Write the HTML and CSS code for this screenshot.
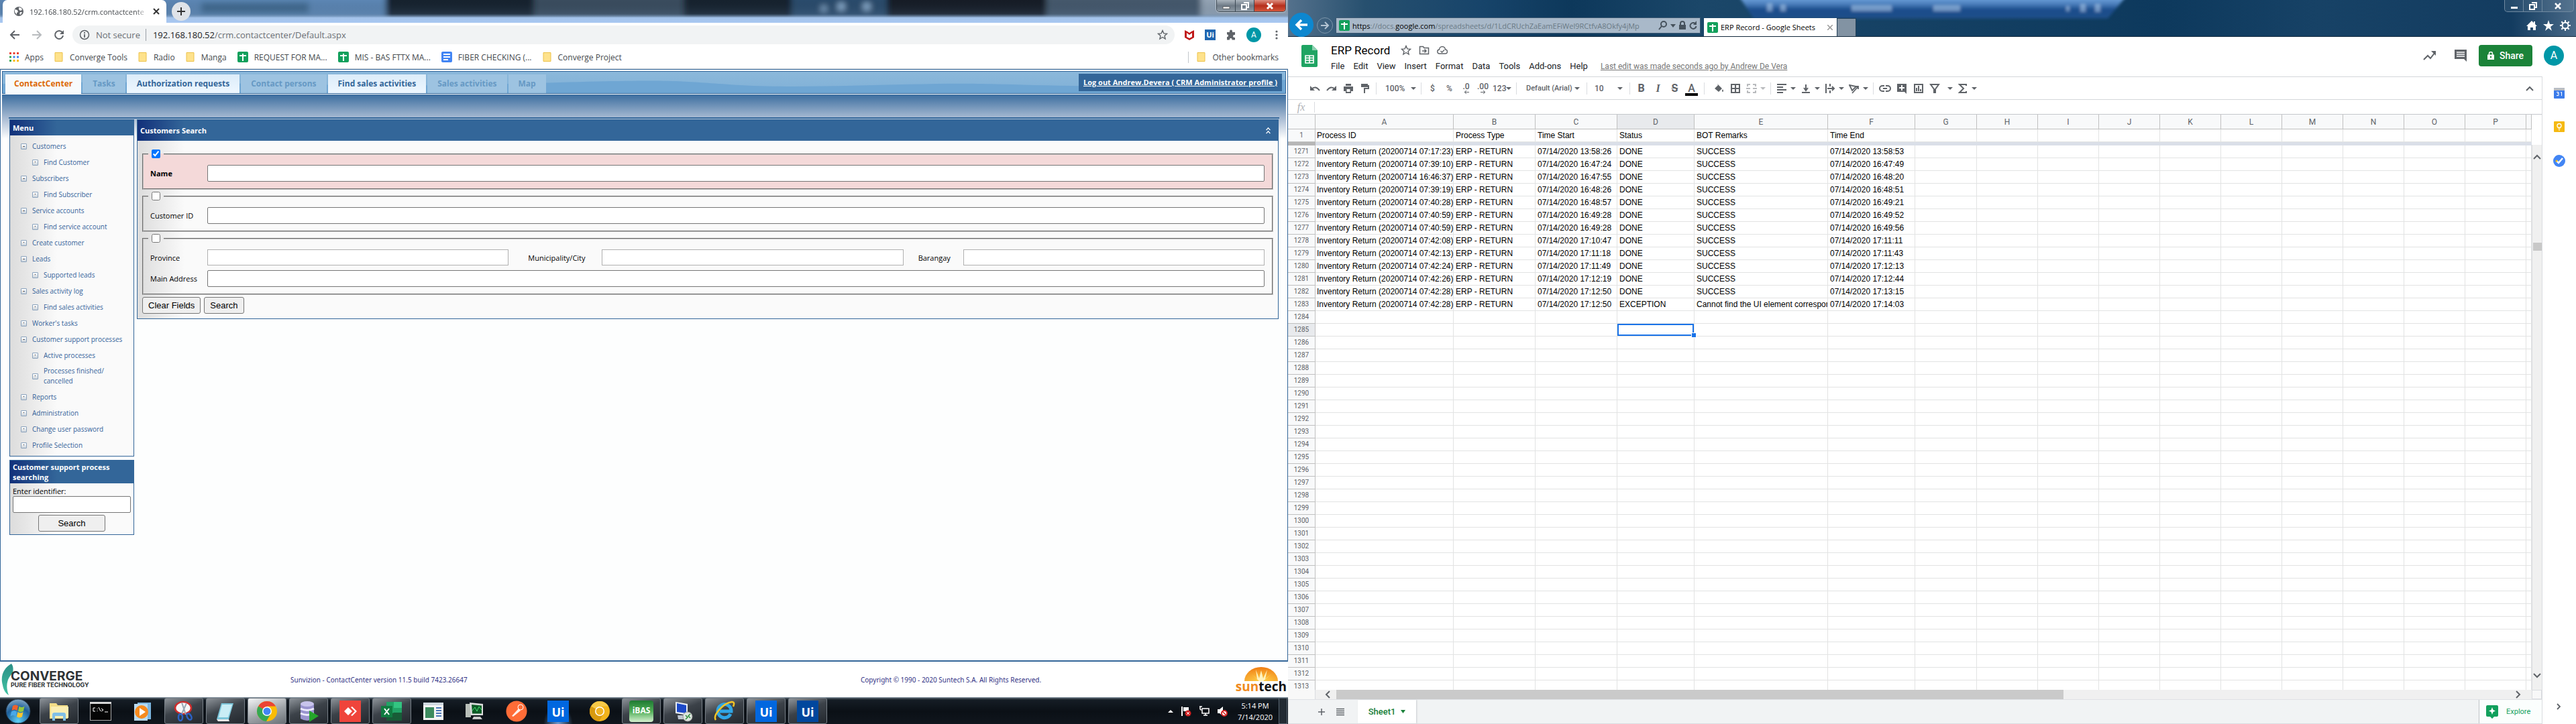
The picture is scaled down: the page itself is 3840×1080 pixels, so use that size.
FILE: index.html
```html
<!DOCTYPE html>
<html lang="en">
<head>
<meta charset="utf-8">
<title>Contact Center and ERP Record</title>
<link rel="stylesheet" href="styles.css">
</head>
<body>
<div class="desktop">

<section class="screen">
  <header class="chrome-strip">
    <svg class="glass" viewBox="0 0 1920 34" preserveAspectRatio="none" aria-hidden="true">
      <defs>
        <linearGradient id="sky" x1="0" y1="0" x2="0" y2="1"><stop offset="0" stop-color="#16222c" stop-opacity="0"/><stop offset=".6" stop-color="#5b7896" stop-opacity=".2"/><stop offset=".78" stop-color="#a3c3ea"/><stop offset="1" stop-color="#a9c8f2"/></linearGradient>
        <filter id="soft" x="-10%" y="-40%" width="120%" height="180%"><feGaussianBlur stdDeviation="4"/></filter>
      </defs>
      <rect width="1920" height="34" fill="#3a4c5e"/>
      <g filter="url(#soft)">
        <rect x="-10" y="-10" width="585" height="50" fill="#5c86b4"/>
        <rect x="300" y="4" width="160" height="16" fill="#41698f"/>
        <rect x="575" y="-10" width="220" height="40" fill="#16222e"/>
        <rect x="1020" y="-10" width="160" height="40" fill="#15212d"/>
        <rect x="1180" y="-10" width="150" height="40" fill="#2a4b6c"/>
        <rect x="1322" y="-10" width="240" height="40" fill="#121c26"/>
        <rect x="1560" y="-10" width="240" height="40" fill="#45586c"/>
        <rect x="1790" y="-10" width="150" height="40" fill="#93a3b4"/>
        <circle cx="1228" cy="13" r="5" fill="#7fa3c5"/><circle cx="1254" cy="10" r="6" fill="#8fb3d5"/><circle cx="1292" cy="10" r="6" fill="#8fb3d5"/>
      </g>
      <rect width="1920" height="34" fill="url(#sky)"/>
    </svg>
    <div class="browser-tab">
      <svg width="16" height="16" viewBox="0 0 16 16"><circle cx="8" cy="8" r="7" fill="#5f6368"/><path d="M2 5l4 1 1 3-2 1v3L2 9zM8 2l4 1 1 3-3 1-2-2zM10 9l3 0-2 4-2-1z" fill="#fff"/></svg>
      <span class="browser-tab-title">192.168.180.52/crm.contactcente</span>
      <button class="bare" aria-label="Close tab"><svg width="10" height="10" viewBox="0 0 10 10"><path d="M1 1l8 8M9 1L1 9" stroke="#333" stroke-width="2"/></svg></button>
    </div>
    <button class="new-tab" aria-label="New tab"><svg width="14" height="14" viewBox="0 0 14 14"><path d="M7 1v12M1 7h12" stroke="#333" stroke-width="2"/></svg></button>
    <div class="win-buttons">
      <button class="win-btn" aria-label="Minimize"><svg width="12" height="12" viewBox="0 0 12 12"><rect x="1" y="7" width="10" height="3" fill="#fff" stroke="#444" stroke-width=".7"/></svg></button>
      <button class="win-btn" aria-label="Restore"><svg width="12" height="12" viewBox="0 0 12 12"><path d="M4 1h7v7h-2M1 4h7v7h-7z" fill="none" stroke="#fff" stroke-width="2"/></svg></button>
      <button class="win-btn win-close" aria-label="Close"><svg width="12" height="12" viewBox="0 0 12 12"><path d="M2 2l8 8M10 2l-8 8" stroke="#fff" stroke-width="3"/></svg></button>
    </div>
  </header>

  <div class="address-row">
    <button class="bare nav-btn" aria-label="Back"><svg width="16" height="16" viewBox="0 0 16 16"><path d="M15 8H2M8 2L2 8l6 6" fill="none" stroke="#5f6368" stroke-width="2"/></svg></button>
    <button class="bare nav-btn" aria-label="Forward"><svg width="16" height="16" viewBox="0 0 16 16"><path d="M1 8h13M8 2l6 6-6 6" fill="none" stroke="#b8bbbe" stroke-width="2"/></svg></button>
    <button class="bare nav-btn" aria-label="Reload"><svg width="16" height="16" viewBox="0 0 16 16"><path d="M13 4.500A6 6 0 1 0 14 9" fill="none" stroke="#5f6368" stroke-width="2"/><path d="M15 1v6H9z" fill="#5f6368"/></svg></button>
    <div class="address-pill">
      <svg width="16" height="16" viewBox="0 0 16 16"><circle cx="8" cy="8" r="6.500" fill="none" stroke="#5f6368" stroke-width="1.500"/><path d="M8 7v5M8 4v2" stroke="#5f6368" stroke-width="1.800"/></svg>
      <span class="not-secure">Not secure</span>
      <span class="url"><b>192.168.180.52</b>/crm.contactcenter/Default.aspx</span>
      <svg class="push" width="16" height="16" viewBox="0 0 16 16"><path d="M8 1.500l1.900 4.400 4.700.4-3.600 3.100 1.100 4.600L8 11.500 3.900 14 5 9.400 1.400 6.300l4.700-.4z" fill="none" stroke="#5f6368" stroke-width="1.400"/></svg>
    </div>
    <div class="extensions">
      <svg width="16" height="16" viewBox="0 0 16 16"><path d="M1 1l4 2 3 2 3-2 4-2v11l-7 4-7-4z" fill="#c01818"/><path d="M4 5l4 3 4-3v6l-4 2-4-2z" fill="#fff"/></svg>
      <span class="ui-badge">Ui</span>
      <svg width="16" height="16" viewBox="0 0 16 16"><path d="M6 2.500a2 2 0 0 1 4 0V4h4v4h-1a2 2 0 0 0 0 4h1v3.500H9.500V14a2 2 0 0 0-3.500 0v1.500H2V11h1a2 2 0 0 0 0-3.500H2V4h4z" fill="#5f6368"/></svg>
      <span class="avatar avatar-small">A</span>
      <svg width="16" height="16" viewBox="0 0 16 16"><g fill="#5f6368"><circle cx="8" cy="3" r="1.600"/><circle cx="8" cy="8" r="1.600"/><circle cx="8" cy="13" r="1.600"/></g></svg>
    </div>
  </div>

  <nav class="bookmarks" aria-label="Bookmarks">
    <a href="#"><svg width="14" height="14" viewBox="0 0 14 14"><path d="M0 0h3v3H0zM5.500 0h3v3h-3zM11 0h3v3h-3z" fill="#ea4335"/><path d="M0 5.500h3v3H0z" fill="#34a853"/><path d="M5.500 5.500h3v3h-3zM11 5.500h3v3h-3z" fill="#4285f4"/><path d="M0 11h3v3H0z" fill="#34a853"/><path d="M5.500 11h3v3h-3zM11 11h3v3h-3z" fill="#fbbc04"/></svg>Apps</a>
    <a href="#"><svg width="14" height="14" viewBox="0 0 14 14"><path d="M1 .5h11v13H1z" fill="#fee28c" stroke="#ecc24a"/></svg>Converge Tools</a>
    <a href="#"><svg width="14" height="14" viewBox="0 0 14 14"><path d="M1 .5h11v13H1z" fill="#fee28c" stroke="#ecc24a"/></svg>Radio</a>
    <a href="#"><svg width="14" height="14" viewBox="0 0 14 14"><path d="M1 .5h11v13H1z" fill="#fee28c" stroke="#ecc24a"/></svg>Manga</a>
    <a href="#"><svg width="16" height="16" viewBox="0 0 16 16"><rect width="16" height="16" rx="2" fill="#12a05c"/><path d="M8 3v11M3 6h10" stroke="#fff" stroke-width="2"/></svg>REQUEST FOR MA...</a>
    <a href="#"><svg width="16" height="16" viewBox="0 0 16 16"><rect width="16" height="16" rx="2" fill="#12a05c"/><path d="M8 3v11M3 6h10" stroke="#fff" stroke-width="2"/></svg>MIS - BAS FTTX MA...</a>
    <a href="#"><svg width="16" height="16" viewBox="0 0 16 16"><rect width="16" height="16" rx="2" fill="#4285f4"/><path d="M3 4h10M3 8h10M3 12h7" stroke="#fff" stroke-width="2"/></svg>FIBER CHECKING (...</a>
    <a href="#"><svg width="14" height="14" viewBox="0 0 14 14"><path d="M1 .5h11v13H1z" fill="#fee28c" stroke="#ecc24a"/></svg>Converge Project</a>
    <a href="#" class="other"><svg width="14" height="14" viewBox="0 0 14 14"><path d="M1 .5h11v13H1z" fill="#fee28c" stroke="#ecc24a"/></svg>Other bookmarks</a>
  </nav>

  <main class="crm">
    <nav class="crm-tabs" aria-label="Sections">
      <svg class="wave" viewBox="0 0 1912 32" preserveAspectRatio="none" aria-hidden="true"><path d="M0 18C250 10 500 26 760 18S1000 14 1100 20s260-4 360-2 300 10 452-6V32H0z" fill="#6fa6d3"/></svg>
      <a href="#" class="crm-tab current">ContactCenter</a>
      <a href="#" class="crm-tab dim">Tasks</a>
      <a href="#" class="crm-tab">Authorization requests</a>
      <a href="#" class="crm-tab dim">Contact persons</a>
      <a href="#" class="crm-tab">Find sales activities</a>
      <a href="#" class="crm-tab dim">Sales activities</a>
      <a href="#" class="crm-tab dim">Map</a>
      <a href="#" class="logout">Log out Andrew.Devera ( CRM Administrator profile )</a>
    </nav>
    <div class="crm-body">
      <div class="rule"></div>
      <div class="crm-columns">
        <aside class="side">
          <section class="panel">
            <h2 class="panel-head menu-head">Menu</h2>
            <ul class="menu">
              <li class="group"><a href="#">Customers</a></li>
              <li class="sub"><a href="#">Find Customer</a></li>
              <li class="group"><a href="#">Subscribers</a></li>
              <li class="sub"><a href="#">Find Subscriber</a></li>
              <li class="group"><a href="#">Service accounts</a></li>
              <li class="sub"><a href="#">Find service account</a></li>
              <li><a href="#">Create customer</a></li>
              <li class="group"><a href="#">Leads</a></li>
              <li class="sub"><a href="#">Supported leads</a></li>
              <li class="group"><a href="#">Sales activity log</a></li>
              <li class="sub"><a href="#">Find sales activities</a></li>
              <li><a href="#">Worker's tasks</a></li>
              <li class="group"><a href="#">Customer support processes</a></li>
              <li class="sub"><a href="#">Active processes</a></li>
              <li class="sub"><a href="#">Processes finished/<br>cancelled</a></li>
              <li><a href="#">Reports</a></li>
              <li><a href="#">Administration</a></li>
              <li><a href="#">Change user password</a></li>
              <li><a href="#">Profile Selection</a></li>
            </ul>
          </section>
          <section class="panel">
            <h2 class="panel-head">Customer support process searching</h2>
            <form class="lookup">
              <label for="identifier">Enter identifier:</label>
              <input id="identifier" class="field" type="text">
              <button type="button" class="push-btn lookup-btn">Search</button>
            </form>
          </section>
        </aside>
        <section class="panel search">
          <h2 class="panel-head search-head">Customers Search
            <svg class="push" width="9" height="10" viewBox="0 0 9 12"><path d="M1 5l3.500-4L8 5M1 11l3.500-4L8 11" fill="none" stroke="#fff" stroke-width="1.600"/></svg>
          </h2>
          <form class="search-form">
            <fieldset class="active">
              <legend><input type="checkbox" checked aria-label="Search by name"></legend>
              <div class="line"><label for="name">Name</label><input id="name" class="field" type="text"></div>
            </fieldset>
            <fieldset>
              <legend><input type="checkbox" aria-label="Search by customer ID"></legend>
              <div class="line"><label for="cid">Customer ID</label><input id="cid" class="field" type="text"></div>
            </fieldset>
            <fieldset>
              <legend><input type="checkbox" aria-label="Search by address"></legend>
              <div class="line triple">
                <label for="prov">Province</label><input id="prov" class="field plain" type="text">
                <label for="city">Municipality/City</label><input id="city" class="field plain" type="text">
                <label for="brgy">Barangay</label><input id="brgy" class="field plain" type="text">
              </div>
              <div class="line"><label for="addr">Main Address</label><input id="addr" class="field" type="text"></div>
            </fieldset>
            <div class="actions">
              <button type="button" class="push-btn">Clear Fields</button>
              <button type="button" class="push-btn">Search</button>
            </div>
          </form>
        </section>
      </div>
    </div>
  </main>

  <footer class="crm-footer">
    <div class="converge">
      <svg width="20" height="48" viewBox="0 0 20 48"><defs><linearGradient id="leaf" x1="0" y1="0" x2="0" y2="1"><stop offset="0" stop-color="#2a8f86"/><stop offset="1" stop-color="#42c3a4"/></linearGradient></defs><path d="M15 0C4 6-2 18 2 32c1 7 5 13 9 15C6 34 8 22 17 14 18 8 18 4 15 0z" fill="url(#leaf)"/></svg>
      <div class="converge-name"><strong>CONVERGE</strong><small>PURE FIBER TECHNOLOGY</small></div>
    </div>
    <p class="version">Sunvizion - ContactCenter version 11.5 build 7423.26647</p>
    <p class="copyright">Copyright © 1990 - 2020 Suntech S.A. All Rights Reserved.</p>
    <div class="suntech">
      <svg width="50" height="22" viewBox="0 0 50 22"><defs><radialGradient id="sun" cx=".5" cy="1" r="1"><stop offset="0" stop-color="#ffd34a"/><stop offset="1" stop-color="#f07c12"/></radialGradient></defs><path d="M0 22a25 21 0 0 1 50 0z" fill="url(#sun)"/><path d="M22 22L10 11l9 8-2-14 5 13 3-12 3 12 6-13-3 14 10-8-13 11z" fill="#fff3c0"/></svg>
      <strong><span>sun</span>tech</strong>
    </div>
  </footer>

  <nav class="taskbar" aria-label="Taskbar">
    <button class="bare orb" aria-label="Start"><svg width="38" height="38" viewBox="0 0 38 38"><defs><radialGradient id="orb" cx=".5" cy=".9" r=".9"><stop offset="0" stop-color="#5fd0f5"/><stop offset=".6" stop-color="#1c5f9c"/><stop offset="1" stop-color="#86a9c4"/></radialGradient></defs><circle cx="19" cy="19" r="18" fill="url(#orb)" stroke="#24384c"/><path d="M11 11q4-3 8 0l-1.500 7q-4-3-8 0z" fill="#f0622b"/><path d="M20.500 11.500q4 3 8 0l-1.500 7q-4 3-8 0z" fill="#94c83d"/><path d="M9 19.500q4-3 8 0l-1.500 7q-4-3-8 0z" fill="#49a8e8"/><path d="M18.500 20q4 3 8 0l-1.500 7q-4 3-8 0z" fill="#fdc52d"/></svg></button>
    <button class="task open" aria-label="Explorer"><svg width="32" height="32" viewBox="0 0 32 32"><path d="M2 4h10l2 3h15v20H2z" fill="#f3dd87"/><path d="M4 9h26v17H4z" fill="#fbeeb2"/><path d="M6 30v-9q0-3 3-3h14q3 0 3 3v9h-4v-7H10v7z" fill="#80bfe6"/></svg></button>
    <button class="task" aria-label="Command prompt"><svg width="32" height="28" viewBox="0 0 32 28"><rect x=".5" y=".5" width="31" height="27" fill="#050505" stroke="#aaa"/><rect width="32" height="3" fill="#d8d8d8"/><path d="M8 9H5v5h3M11 10v1M11 13v1M13 8l3 6M17 10l3 2-3 2M22 15h5" stroke="#fff" fill="none"/></svg></button>
    <button class="task" aria-label="Media player"><svg width="30" height="30" viewBox="0 0 30 30"><rect x="8" y="2" width="20" height="25" fill="#7cb7e2"/><rect x="3" y="4" width="20" height="25" fill="#b9dcf3"/><circle cx="14" cy="16" r="10" fill="#f68b1f"/><path d="M11 10l9 6-9 6z" fill="#fff"/></svg></button>
    <button class="task open" aria-label="Snipping tool"><svg width="32" height="32" viewBox="0 0 32 32"><ellipse cx="15" cy="11" rx="12" ry="9" fill="#f7f7f7" stroke="#cf2c2c" stroke-width="2.500"/><path d="M13 3l6 18M20 4l-8 18" stroke="#9aa7b3" stroke-width="2"/><ellipse cx="11" cy="25" rx="3" ry="5" fill="none" stroke="#2c63c7" stroke-width="2.500"/><ellipse cx="24" cy="24" rx="3" ry="5" fill="none" stroke="#2c63c7" stroke-width="2.500" transform="rotate(-30 24 24)"/></svg></button>
    <button class="task open" aria-label="Notepad"><svg width="32" height="32" viewBox="0 0 32 32"><path d="M10 4h18l-7 24H3z" fill="#7cc5d9"/><path d="M11 6h15l-6 19H6z" fill="#c9edf5"/><path d="M3 28l18 0 1 3H5z" fill="#e8e8e8"/></svg></button>
    <button class="task open lit" aria-label="Chrome"><svg width="32" height="32" viewBox="0 0 32 32"><circle cx="16" cy="16" r="15" fill="#fbbc05"/><path d="M16 16L3 8.500A15 15 0 0 1 29 8.500H16z" fill="#ea4335"/><path d="M16 16L3 8.500A15 15 0 0 0 15 31l7-12z" fill="#34a853"/><circle cx="16" cy="16" r="7" fill="#fff"/><circle cx="16" cy="16" r="5.500" fill="#4285f4"/></svg></button>
    <button class="task open" aria-label="Database client"><svg width="32" height="32" viewBox="0 0 32 32"><path d="M4 5v22q10 6 20 0V5z" fill="#9a94cf"/><path d="M4 12q10 5 20 0M4 19q10 5 20 0" stroke="#eceaff" stroke-width="3" fill="none"/><ellipse cx="14" cy="5" rx="10" ry="4" fill="#c8c4ec"/><path d="M17 15l14 8-14 9z" fill="#25a52b"/></svg></button>
    <button class="task open" aria-label="AnyDesk"><svg width="32" height="32" viewBox="0 0 32 32"><rect width="32" height="32" fill="#ef443b"/><path d="M13 10l6 6-6 6-6-6zM17 10l2-1 7 7-7 7-2-1 6-6z" fill="#fff"/></svg></button>
    <button class="task open" aria-label="Excel"><svg width="32" height="32" viewBox="0 0 32 32"><path d="M8 2h23v28H8z" fill="#21a366"/><path d="M19 2h12v9H19z" fill="#33c481"/><path d="M19 18h12v12H8v-6z" fill="#185c37"/><rect y="8" width="17" height="17" fill="#107c41"/><path d="M5 12l7 9M12 12l-7 9" stroke="#fff" stroke-width="2"/></svg></button>
    <button class="task" aria-label="Document viewer"><svg width="30" height="26" viewBox="0 0 30 26"><rect width="30" height="26" fill="#f5f5f5"/><rect width="30" height="4" fill="#cfd8e0"/><rect x="3" y="7" width="13" height="16" fill="#3d8b5f"/><path d="M19 8h8M19 12h8M19 16h8M19 20h8" stroke="#4a76b8" stroke-width="2"/></svg></button>
    <button class="task" aria-label="System monitor"><svg width="32" height="32" viewBox="0 0 32 32"><rect x="2" y="5" width="8" height="20" fill="#b8beb8"/><path d="M8 3l20 2v17H10z" fill="#dcdcdc"/><path d="M11 6l15 1.500v12H12z" fill="#0c5a25"/><path d="M12 15l4-5 3 6 3-7 4 5" stroke="#49e070" fill="none"/><path d="M14 24h10l3 4H12z" fill="#c9c9c9"/></svg></button>
    <button class="task" aria-label="Postman"><svg width="32" height="32" viewBox="0 0 32 32"><circle cx="16" cy="16" r="15.500" fill="#ff6c37"/><path d="M9 23l10-11 3 3L11 24z" fill="#fff" opacity=".9"/><circle cx="22" cy="10" r="4" fill="none" stroke="#fff"/></svg></button>
    <button class="task glow" aria-label="UiPath"><span class="ui-tile">Ui</span></button>
    <button class="task" aria-label="Chrome Canary"><svg width="32" height="32" viewBox="0 0 32 32"><circle cx="16" cy="16" r="15" fill="#f2b41b"/><path d="M16 16L3 8.500A15 15 0 0 1 29 8.500H16z" fill="#f7c948"/><path d="M16 16L3 8.500A15 15 0 0 0 15 31l7-12z" fill="#d89a10"/><circle cx="16" cy="16" r="7" fill="#fff"/><circle cx="16" cy="16" r="5.500" fill="#f0b323"/></svg></button>
    <button class="task open" aria-label="iBAS"><span class="ibas">iBAS</span></button>
    <button class="task open" aria-label="Remote desktop"><svg width="32" height="32" viewBox="0 0 32 32"><path d="M5 2l18 3v17L5 19z" fill="#e9eef5"/><path d="M7 4l14 3v12L7 17z" fill="#1c49c8"/><path d="M8 22h12l3 6H9z" fill="#bfc7d1"/><circle cx="23" cy="24" r="7" fill="#dfe6e0" stroke="#999"/><path d="M20 22l3 3-3 3M27 20l-3 3 3 3" stroke="#2a8f3a" fill="none" stroke-width="1.500"/></svg></button>
    <button class="task open" aria-label="Internet Explorer"><svg width="32" height="32" viewBox="0 0 32 32"><path d="M25 20a10 10 0 1 1 1-4H9" fill="none" stroke="#2fa6e6" stroke-width="5"/><path d="M3 29C-2 22 14 4 27 2q5 0 2 7" fill="none" stroke="#f6c524" stroke-width="2.500"/></svg></button>
    <button class="task open" aria-label="UiPath Studio"><span class="ui-tile">Ui</span></button>
    <button class="task open" aria-label="UiPath Robot"><span class="ui-tile deep">Ui</span></button>
    <div class="tray">
      <svg width="8" height="6" viewBox="0 0 8 6"><path d="M0 5l4-4 4 4z" fill="#fff"/></svg>
      <svg width="16" height="16" viewBox="0 0 16 16"><path d="M2 1v14" stroke="#fff" stroke-width="2"/><path d="M4 2h8v6H4z" fill="#fff"/><circle cx="11" cy="11" r="4.500" fill="#d32020"/><path d="M9 9l4 4M13 9l-4 4" stroke="#fff"/></svg>
      <svg width="16" height="16" viewBox="0 0 16 16"><path d="M5 4h10v7H5zM7 14h6M10 11v3M2 1v3q0 2 2 2M1 1h4" fill="none" stroke="#fff" stroke-width="1.500"/></svg>
      <svg width="16" height="16" viewBox="0 0 16 16"><path d="M1 5h3l5-4v14l-5-4H1z" fill="#fff"/><circle cx="11" cy="11" r="4" fill="#fff" stroke="#d32020" stroke-width="2"/><path d="M8 8l6 6" stroke="#d32020" stroke-width="1.500"/></svg>
      <div class="clock"><span>5:14 PM</span><span>7/14/2020</span></div>
      <span class="show-desktop"></span>
    </div>
  </nav>
</section>

<section class="screen sheets">
  <header class="ie-bar">
    <svg class="glass" viewBox="0 0 1920 55" preserveAspectRatio="none" aria-hidden="true">
      <defs>
        <linearGradient id="ie" x1="0" x2="1"><stop offset="0" stop-color="#54718c"/><stop offset=".06" stop-color="#27506f"/><stop offset=".15" stop-color="#17446a"/><stop offset=".22" stop-color="#0d385b"/><stop offset=".32" stop-color="#1b4769"/><stop offset=".68" stop-color="#0d395d"/><stop offset=".8" stop-color="#174266"/><stop offset=".95" stop-color="#133c60"/><stop offset="1" stop-color="#4a6a88"/></linearGradient>
        <linearGradient id="ghost" x1="0" y1="0" x2="0" y2="1"><stop offset="0" stop-color="#79abe4"/><stop offset=".35" stop-color="#4c80bd"/><stop offset=".6" stop-color="#1b4d8c"/><stop offset="1" stop-color="#205089"/></linearGradient>
        <filter id="haze" x="-5%" y="-40%" width="110%" height="180%"><feGaussianBlur stdDeviation="2"/></filter>
      </defs>
      <rect width="1920" height="55" fill="url(#ie)"/>
      <g filter="url(#haze)"><path d="M672-6h578l-28 34H694z" fill="url(#ghost)"/><path d="M714 5h8v12h-8zM734 7h8v10h-8zM840 8h60v9h-60zM962 8h40v9h-40zM1160 9h5v8h-5zM1181 6h8v12h-8zM1203 6h8v12h-8z" fill="#b4d0ef" opacity=".55"/></g>
    </svg>
    <button class="bare ie-back" aria-label="Back"><svg width="20" height="20" viewBox="0 0 20 20"><path d="M19 10H3M10 3l-7 7 7 7" fill="none" stroke="#fff" stroke-width="3.500"/></svg></button>
    <button class="bare ie-forward" aria-label="Forward"><svg width="14" height="14" viewBox="0 0 14 14"><path d="M1 7h11M7 2l5 5-5 5" fill="none" stroke="#b3c4d3" stroke-width="2"/></svg></button>
    <div class="ie-address">
      <svg width="16" height="16" viewBox="0 0 16 16"><rect width="16" height="16" rx="2" fill="#12a05c"/><path d="M8 3v11M3 6h10" stroke="#fff" stroke-width="2"/></svg>
      <span class="ie-url"><b>https</b>://docs.<b>google.com</b>/spreadsheets/d/1LdCRUchZaEamEFiWel9RCtfvA8Okfy4jMp</span>
      <svg width="14" height="14" viewBox="0 0 14 14"><circle cx="8" cy="5" r="4" fill="none" stroke="#46525d" stroke-width="2"/><path d="M5 8l-4 5" stroke="#46525d" stroke-width="2"/></svg>
      <svg width="8" height="5" viewBox="0 0 8 5"><path d="M0 0h8L4 5z" fill="#46525d"/></svg>
      <svg width="12" height="14" viewBox="0 0 12 14"><path d="M1 6h10v7H1z" fill="#46525d"/><path d="M3 6V4a3 3 0 0 1 6 0v2" fill="none" stroke="#46525d" stroke-width="2"/></svg>
      <svg width="12" height="14" viewBox="0 0 12 14"><path d="M9 4a4.500 4.500 0 1 0 1.500 4" fill="none" stroke="#46525d" stroke-width="2"/><path d="M11 0v6H6z" fill="#46525d"/></svg>
    </div>
    <div class="ie-tab">
      <svg width="16" height="16" viewBox="0 0 16 16"><rect width="16" height="16" rx="2" fill="#12a05c"/><path d="M8 3v11M3 6h10" stroke="#fff" stroke-width="2"/></svg>
      <span>ERP Record - Google Sheets</span>
      <button class="bare push" aria-label="Close tab"><svg width="8" height="8" viewBox="0 0 8 8"><path d="M0 0l8 8M8 0L0 8" stroke="#999" stroke-width="1.500"/></svg></button>
    </div>
    <div class="ie-stub"></div>
    <div class="ie-tools">
      <svg width="16" height="16" viewBox="0 0 16 16"><path d="M8 1L0 9h2v6h4v-4h4v4h4V9h2l-3-3V2h-2v2z" fill="#fff"/></svg>
      <svg width="16" height="16" viewBox="0 0 16 16"><path d="M8 0l2 6h6l-5 4 2 6-5-4-5 4 2-6-5-4h6z" fill="#fff"/></svg>
      <svg width="16" height="16" viewBox="0 0 16 16"><circle cx="8" cy="8" r="4.500" fill="none" stroke="#fff" stroke-width="2"/><path d="M8 0v3M8 13v3M0 8h3M13 8h3M2.300 2.300l2 2M11.700 11.700l2 2M2.300 13.700l2-2M11.700 4.300l2-2" stroke="#fff" stroke-width="2"/></svg>
    </div>
    <div class="win-buttons clear">
      <button class="win-btn" aria-label="Minimize"><svg width="12" height="12" viewBox="0 0 12 12"><rect x="1" y="7" width="10" height="3" fill="#fff"/></svg></button>
      <button class="win-btn" aria-label="Restore"><svg width="12" height="12" viewBox="0 0 12 12"><path d="M4 1h7v7h-2M1 4h7v7h-7z" fill="none" stroke="#fff" stroke-width="2"/></svg></button>
      <button class="win-btn win-wide" aria-label="Close"><svg width="12" height="12" viewBox="0 0 12 12"><path d="M2 2l8 8M10 2l-8 8" stroke="#fff" stroke-width="2.500"/></svg></button>
    </div>
  </header>

  <header class="doc-head">
    <svg class="doc-logo" width="24" height="33" viewBox="0 0 24 33"><path d="M2 0h14l8 8v23q0 2-2 2H2q-2 0-2-2V2q0-2 2-2z" fill="#1fa463"/><path d="M16 0l8 8h-8z" fill="#8ed1b1"/><path d="M6 16h12v11H6zM6 19.500h12M6 23h12M12 16v11" fill="none" stroke="#fff" stroke-width="1.600"/></svg>
    <div class="doc-info">
      <div class="doc-title"><h1>ERP Record</h1>
        <svg width="16" height="16" viewBox="0 0 16 16"><path d="M8 1.500l1.900 4.400 4.700.4-3.600 3.100 1.100 4.600L8 11.500 3.900 14 5 9.400 1.400 6.300l4.700-.4z" fill="none" stroke="#5f6368" stroke-width="1.400"/></svg>
        <svg width="16" height="16" viewBox="0 0 16 16"><path d="M1.500 2.500h5l1.500 2h6.500v9h-13zM5 9h6M8.500 6.500L11 9l-2.500 2.500" fill="none" stroke="#5f6368" stroke-width="1.500"/></svg>
        <svg width="16" height="16" viewBox="0 0 16 16"><path d="M4 13a3 3 0 0 1-.5-6A4.500 4.500 0 0 1 12.500 7a3 3 0 0 1 0 6zM5.500 9l2 2 3.500-3.500" fill="none" stroke="#5f6368" stroke-width="1.400"/></svg>
      </div>
      <nav class="doc-menu" aria-label="Document menu">
        <a href="#">File</a><a href="#">Edit</a><a href="#">View</a><a href="#">Insert</a><a href="#">Format</a><a href="#">Data</a><a href="#">Tools</a><a href="#">Add-ons</a><a href="#">Help</a><a href="#" class="last-edit">Last edit was made seconds ago by Andrew De Vera</a>
      </nav>
    </div>
    <div class="doc-actions">
      <svg width="20" height="16" viewBox="0 0 20 16"><path d="M1 14l6-6 4 4 7-9" fill="none" stroke="#5f6368" stroke-width="2"/><path d="M12 1h7v7z" fill="#5f6368"/></svg>
      <svg width="20" height="20" viewBox="0 0 20 20"><path d="M1 1h18v18l-4-4H1z" fill="#5f6368"/><path d="M4 5h12M4 8h12M4 11h12" stroke="#fff" stroke-width="1.500"/></svg>
      <button class="share"><svg width="10" height="12" viewBox="0 0 10 12"><path d="M0 4.500h10V12H0z" fill="#fff"/><path d="M2.500 5V3a2.500 2.500 0 0 1 5 0v2" fill="none" stroke="#fff" stroke-width="1.500"/><circle cx="5" cy="8" r="1.200" fill="#1b8339"/></svg>Share</button>
      <span class="avatar">A</span>
    </div>
  </header>

  <div class="work">
    <div class="work-main">
      <div class="toolbar">
        <button class="tool" aria-label="Undo"><svg width="16" height="16" viewBox="0 0 16 16"><path d="M3 9q6-6 12 2" fill="none" stroke="#5f6368" stroke-width="2"/><path d="M1 4v7h7z" fill="#5f6368"/></svg></button>
        <button class="tool" aria-label="Redo"><svg width="16" height="16" viewBox="0 0 16 16"><path d="M13 9Q7 3 1 11" fill="none" stroke="#5f6368" stroke-width="2"/><path d="M15 4v7H8z" fill="#5f6368"/></svg></button>
        <button class="tool" aria-label="Print"><svg width="16" height="16" viewBox="0 0 16 16"><path d="M4 1h8v3H4zM1 5h14v7h-3v3H4v-3H1z" fill="#5f6368"/><path d="M5.500 9h5v4h-5z" fill="#fff"/></svg></button>
        <button class="tool" aria-label="Paint format"><svg width="16" height="16" viewBox="0 0 16 16"><path d="M2 1h10v5H2zM12 3h2v6H8v6H6V7h6z" fill="#5f6368"/></svg></button>
        <i class="sep"></i>
        <button class="tool drop zoom">100%</button>
        <i class="sep"></i>
        <button class="tool">$</button>
        <button class="tool">%</button>
        <button class="tool dec">.0<svg width="8" height="5" viewBox="0 0 8 5"><path d="M8 2.500H2M4 0L1 2.500 4 5" fill="none" stroke="#5f6368"/></svg></button>
        <button class="tool dec">.00<svg width="8" height="5" viewBox="0 0 8 5"><path d="M0 2.500h6M4 0l3 2.500L4 5" fill="none" stroke="#5f6368"/></svg></button>
        <button class="tool drop number">123</button>
        <i class="sep"></i>
        <button class="tool drop font">Default (Arial)</button>
        <i class="sep"></i>
        <button class="tool drop size">10</button>
        <i class="sep"></i>
        <button class="tool heavy">B</button>
        <button class="tool heavy slant">I</button>
        <button class="tool heavy struck">S</button>
        <button class="tool inked">A</button>
        <i class="sep wide"></i>
        <button class="tool" aria-label="Fill colour"><svg width="16" height="16" viewBox="0 0 16 16"><path d="M6 1l7 7-5 5-6-5 5-5" fill="#5f6368"/><path d="M14 9q2 3 0 4-2-1 0-4z" fill="#5f6368"/></svg></button>
        <button class="tool" aria-label="Borders"><svg width="16" height="16" viewBox="0 0 16 16"><path d="M2 2h12v12H2zM8 2v12M2 8h12" fill="none" stroke="#5f6368" stroke-width="2"/></svg></button>
        <button class="tool drop pair faint" aria-label="Merge"><svg width="16" height="16" viewBox="0 0 16 16"><path d="M6 2H2v3M10 2h4v3M6 14H2v-3M10 14h4v-3M0 8h6M16 8h-6" fill="none" stroke="#b9bbbe" stroke-width="2"/></svg></button>
        <i class="sep"></i>
        <button class="tool drop pair" aria-label="Horizontal align"><svg width="16" height="16" viewBox="0 0 16 16"><path d="M1 2h14M1 6h9M1 10h14M1 14h9" stroke="#5f6368" stroke-width="2"/></svg></button>
        <button class="tool drop pair" aria-label="Vertical align"><svg width="16" height="16" viewBox="0 0 16 16"><path d="M2 14h12M8 2v8M5 7l3 4 3-4" fill="none" stroke="#5f6368" stroke-width="2"/></svg></button>
        <button class="tool drop pair" aria-label="Text wrapping"><svg width="16" height="16" viewBox="0 0 16 16"><path d="M2 1v14M8 1v4M8 11v4M4 8h10M11 5l3 3-3 3" fill="none" stroke="#5f6368" stroke-width="2"/></svg></button>
        <button class="tool drop pair" aria-label="Text rotation"><svg width="16" height="16" viewBox="0 0 16 16"><path d="M1 3l10 2-6 6zM5 15L14 5M14 9V5h-4" fill="none" stroke="#5f6368" stroke-width="1.800"/></svg></button>
        <i class="sep"></i>
        <button class="tool" aria-label="Insert link"><svg width="18" height="16" viewBox="0 0 18 16"><path d="M8 4H5a4 4 0 0 0 0 8h3M10 4h3a4 4 0 0 1 0 8h-3M6 8h6" fill="none" stroke="#5f6368" stroke-width="2"/></svg></button>
        <button class="tool" aria-label="Insert comment"><svg width="16" height="16" viewBox="0 0 16 16"><path d="M1 1h14v15l-3-3H1z" fill="#5f6368"/><path d="M8 3v8M4 7h8" stroke="#fff" stroke-width="2"/></svg></button>
        <button class="tool" aria-label="Insert chart"><svg width="16" height="16" viewBox="0 0 16 16"><path d="M2 2h12v12H2zM5 7v5M8 4v8M11 9v3" fill="none" stroke="#5f6368" stroke-width="2"/></svg></button>
        <button class="tool drop pair filter" aria-label="Filter"><svg width="16" height="16" viewBox="0 0 16 16"><path d="M2 2h12L9 9v5H7V9z" fill="none" stroke="#5f6368" stroke-width="2"/></svg></button>
        <button class="tool drop pair" aria-label="Functions"><svg width="16" height="16" viewBox="0 0 16 16"><path d="M13 4V2H3l6 6-6 6h10v-2" fill="none" stroke="#5f6368" stroke-width="2"/></svg></button>
        <button class="bare push" aria-label="Hide menus"><svg width="12" height="8" viewBox="0 0 12 8"><path d="M1 7l5-5 5 5" fill="none" stroke="#5f6368" stroke-width="2"/></svg></button>
      </div>
      <div class="formula"><label for="fx">fx</label><input id="fx" type="text"></div>
      <div class="grid-area">
        <div class="grid-view"><table class="grid"><colgroup id="cols"></colgroup><thead id="head"></thead><tbody id="rows"></tbody></table></div>
        <div class="vbar">
          <svg class="vbar-up" width="12" height="8" viewBox="0 0 12 8"><path d="M1 7l5-5 5 5" fill="none" stroke="#5f6368" stroke-width="2"/></svg>
          <span class="vthumb"></span>
          <svg class="vbar-down" width="12" height="8" viewBox="0 0 12 8"><path d="M1 1l5 5 5-5" fill="none" stroke="#5f6368" stroke-width="2"/></svg>
        </div>
      </div>
      <div class="hbar">
        <span class="hbar-end"></span>
        <svg width="8" height="12" viewBox="0 0 8 12"><path d="M7 1L2 6l5 5" fill="none" stroke="#5f6368" stroke-width="2"/></svg>
        <span class="hthumb"></span>
        <svg class="push" width="8" height="12" viewBox="0 0 8 12"><path d="M1 1l5 5-5 5" fill="none" stroke="#5f6368" stroke-width="2"/></svg>
        <span class="corner"></span>
      </div>
      <footer class="sheet-bar">
        <button class="bare" aria-label="Add sheet"><svg width="12" height="12" viewBox="0 0 12 12"><path d="M6 1v10M1 6h10" stroke="#5f6368" stroke-width="1.500"/></svg></button>
        <button class="bare" aria-label="All sheets"><svg width="12" height="12" viewBox="0 0 12 12"><path d="M0 1.500h12M0 4.500h12M0 7.500h12M0 10.500h12" stroke="#5f6368" stroke-width="1.500"/></svg></button>
        <button class="sheet-tab">Sheet1<svg width="7" height="5" viewBox="0 0 7 5"><path d="M0 0h7L3.500 5z" fill="#188038"/></svg></button>
        <button class="explore"><svg width="18" height="20" viewBox="0 0 18 20"><path d="M2 0h14q2 0 2 2v13q0 2-2 2h-4l-3 3-3-3H2q-2 0-2-2V2q0-2 2-2z" fill="#12a05c"/><path d="M9 3l1.500 4L14 8.500 10.500 10 9 14l-1.500-4L4 8.500 7.500 7z" fill="#fff"/></svg>Explore</button>
      </footer>
    </div>
    <aside class="addons">
      <svg width="16" height="16" viewBox="0 0 16 16"><rect width="16" height="16" rx="1" fill="#3b7bea"/><rect width="16" height="4" fill="#b9bdc4"/><path d="M4 6.500h3v2H5.500H7v3H4M10 7l1.500-.5V12" fill="none" stroke="#fff"/></svg>
      <svg width="16" height="16" viewBox="0 0 16 16"><rect width="16" height="16" rx="1" fill="#f5b912"/><circle cx="8" cy="6.500" r="3" fill="none" stroke="#fff" stroke-width="1.300"/><path d="M6.500 11h3M7 13h2" stroke="#fff"/></svg>
      <svg width="18" height="18" viewBox="0 0 18 18"><circle cx="9" cy="9" r="9" fill="#4285f4"/><path d="M5 9l3 3 6-7" fill="none" stroke="#fff" stroke-width="2.500"/><circle cx="5" cy="9" r="1.500" fill="#fbbc04"/></svg>
      <button class="bare addons-toggle" aria-label="Hide side panel"><svg width="8" height="10" viewBox="0 0 8 10"><path d="M1 1l4 4-4 4" fill="none" stroke="#5f6368" stroke-width="1.800"/></svg></button>
    </aside>
  </div>
</section>
</div>
<script src="grid.js"></script>
</body>
</html>
```
FILE: styles.css
```css
*, *::before, *::after { box-sizing: border-box; }
body { margin: 0; font-family: "Open Sans", "Noto Sans", sans-serif; font-size: 12px; color: #000; }
h1, h2, p, ul { margin: 0; padding: 0; }
a { color: inherit; text-decoration: none; }
svg { display: block; flex: none; }
button { font-family: inherit; }
.bare { border: 0; background: none; padding: 0; display: flex; align-items: center; justify-content: center; }
.push { margin-left: auto; }

.desktop { display: grid; grid-template-columns: 1fr 1fr; height: 100vh; }
.screen { display: flex; flex-direction: column; min-width: 0; min-height: 0; background: #fff; }
.glass { position: absolute; inset: 0; width: 100%; height: 100%; }

/* Chrome window */
.chrome-strip { position: relative; height: 34px; display: flex; padding-left: 4px; flex: none; }
.browser-tab { position: relative; width: 244px; background: #fff; border-radius: 7px 7px 0 0; display: flex; align-items: center; gap: 8px; padding: 0 10px 0 16px; }
.browser-tab-title { flex: 1; overflow: hidden; white-space: nowrap; font-size: 11px; color: #45494d; mask-image: linear-gradient(to right, #000 90%, transparent); }
.new-tab { position: relative; width: 28px; height: 28px; margin: 3px 0 0 8px; padding: 0; border: 0; border-radius: 50%; background: #dfe3e8; display: flex; align-items: center; justify-content: center; }
.win-buttons { position: absolute; top: 0; right: 3px; display: flex; height: 18px; border: 1px solid #3d4a55; border-top: 0; border-radius: 0 0 5px 5px; overflow: hidden; box-shadow: 0 0 0 1px #ffffff66; }
.win-btn { width: 28px; border: 0; border-right: 1px solid #3d4a55; padding: 0; display: flex; align-items: center; justify-content: center; background: linear-gradient(#aab4bd, #6f7b87 50%, #8d99a4); }
.win-close, .win-wide { width: 46px; border-right: 0; }
.win-close { background: linear-gradient(#dd8f80, #b62f1c 50%, #d2573c); }
.clear { border-color: #6f89a0; box-shadow: none; }
.clear .win-btn { background: #ffffff14; border-color: #6f89a0; }

.address-row { height: 34px; flex: none; display: flex; align-items: center; padding: 4px 9px 2px 5px; }
.nav-btn { width: 33px; }
.address-pill { flex: 1; height: 28px; margin-left: 4px; border-radius: 14px; background: #f1f3f4; display: flex; align-items: center; padding: 0 10px; color: #6b6f74; font-size: 13px; }
.not-secure { margin-left: 9px; padding-right: 8px; border-right: 1px solid #9aa0a6; }
.url { margin-left: 10px; font-size: 13px; }
.url b { font-weight: 400; color: #202124; }
.extensions { display: flex; align-items: center; gap: 15px; padding-left: 14px; }
.ui-badge { width: 16px; height: 16px; background: #1f66b0; color: #fff; font: 700 11px/16px "Open Sans", sans-serif; text-align: center; }
.avatar { width: 30px; height: 30px; border-radius: 50%; background: #0097a7; color: #fff; font: 16px/30px Roboto, sans-serif; text-align: center; }
.avatar-small { width: 22px; height: 22px; font-size: 12px; line-height: 22px; }

.bookmarks { height: 35px; flex: none; display: flex; align-items: center; gap: 16px; padding: 0 14px; border-bottom: 1px solid #d6d9dc; color: #45494d; white-space: nowrap; }
.bookmarks a { display: flex; align-items: center; gap: 9px; }
.bookmarks .other { margin-left: auto; padding-left: 12px; border-left: 1px solid #c4c8cc; }

/* CRM page */
.crm { flex: 1; min-height: 0; display: flex; flex-direction: column; border: 1px solid #336699; border-bottom-width: 2px; padding: 2px 2px 0; background: #fdfefe; }
.crm-tabs { position: relative; flex: none; height: 34px; border: 1px solid #336699; background: linear-gradient(#8bb8db, #80b0d6); display: flex; align-items: flex-end; gap: 2px; padding-left: 4px; margin-bottom: 1px; }
.wave { position: absolute; inset: 0; width: 100%; height: 100%; }
.crm-tab { position: relative; height: 28px; padding: 0 15px; background: linear-gradient(#dcecf9, #eef7ff); color: #336699; font-weight: 700; font-size: 12px; line-height: 28px; white-space: nowrap; }
.crm-tab.current { height: 29px; padding: 0 13px; background: #f7fafc; color: #dd6a0a; margin-bottom: -1px; }
.crm-tab.dim { background: #9dc3e1; color: #6699c4; }
.logout { position: relative; margin: 0 5px 3px auto; height: 26px; padding: 0 7px; background: #336699; color: #fff; font-weight: 700; font-size: 11px; line-height: 26px; text-decoration: underline; white-space: nowrap; }
.crm-body { flex: 1; min-height: 0; padding: 34px 10px 0; background: linear-gradient(#3b6d9f, #a4b8d1 34px, #fdfefe 66px); }
.rule { height: 3px; background: #336699; border-bottom: 1px solid #b6c9de; }
.crm-columns { display: flex; align-items: flex-start; gap: 4px; padding: 0 1px; }
.side { width: 186px; flex: none; display: flex; flex-direction: column; gap: 5px; }
.panel { border: 1px solid #336699; background: linear-gradient(to right, #dcdcdc, #fafafa 70px); }
.panel-head { background: linear-gradient(to right, #12307a, #336699 70px); color: #fff; font-size: 11px; line-height: 15px; padding: 2px 4px; }
.menu-head { padding: 4px 4px; }
.search { flex: 1; min-width: 0; }
.search-head { display: flex; align-items: center; height: 31px; padding-right: 10px; }
.menu { list-style: none; padding: 4px 0 4px; color: #35639a; font-size: 10px; line-height: 15px; }
.menu li { display: flex; align-items: center; min-height: 24px; padding-left: 16px; }
.menu li.sub { padding-left: 33px; }
.menu li.sub a { padding: 4px 0; }
.menu li::before { content: "·"; width: 9px; height: 9px; margin-right: 8px; border: 1px solid #8ba3bd; border-radius: 1px; background: linear-gradient(#fff, #ccd3da); color: #000; font: 9px/7px "DejaVu Sans", sans-serif; text-align: center; flex: none; }
.menu li.group::before { content: "-"; }
.lookup { display: flex; flex-direction: column; align-items: center; padding: 4px 4px; font-size: 11px; line-height: 15px; }
.lookup label { align-self: flex-start; }
.field { width: 100%; height: 25px; border: 1px solid #767676; border-radius: 2px; background: #fff; padding: 0 4px; font: 13px "Liberation Sans", Arial, sans-serif; }
.field.plain { height: 24px; border-color: #b0b0b0; border-radius: 0; }
.push-btn { height: 25px; padding: 0 8px; border: 1px solid #767676; border-radius: 3px; background: #efefef; font: 13px "Liberation Sans", Arial, sans-serif; color: #000; }
.lookup-btn { width: 100px; margin-top: 3px; }
.search-form { padding: 13px 7px 7px; font-size: 11px; }
fieldset { margin: 0 0 3px; padding: 9px 11px 10px 10px; border: 2px groove #c0c0c0; min-width: 0; }
fieldset.active { background: #f4d9d9; font-weight: 700; }
legend { height: 14px; padding: 0 5px; margin-left: -3px; }
legend input { display: block; margin: 0; width: 13px; height: 13px; }
.line { display: grid; grid-template-columns: 85px 1fr; align-items: center; }
.triple { grid-template-columns: 85px 1fr 139px 1fr 89px 1fr; margin-bottom: 7px; }
.triple label:nth-of-type(2) { padding-left: 29px; }
.triple label:nth-of-type(3) { padding-left: 22px; }
.actions { display: flex; gap: 5px; }

.crm-footer { height: 53px; flex: none; display: flex; align-items: center; padding: 0 2px; color: #333385; }
.converge { display: flex; align-items: center; width: 431px; }
.converge svg { margin-right: -6px; }
.converge-name { position: relative; display: flex; flex-direction: column; color: #2f3336; }
.converge-name strong { font: 700 19px/16px Inter, sans-serif; }
.converge-name small { font: 700 9px/10px Inter, sans-serif; }
.version, .copyright { font: 10px/14px "Noto Sans", sans-serif; }
.version { width: 850px; }
.suntech { margin-left: auto; display: flex; flex-direction: column; align-items: center; }
.suntech strong { font: 700 19px/17px "Open Sans", sans-serif; color: #111; }
.suntech strong span { color: #f08a1d; }

/* Taskbar */
.taskbar { height: 40px; flex: none; display: flex; align-items: stretch; background: linear-gradient(#56626c, #151d25 3px, #0b1016 20px, #10161d); border-top: 1px solid #7c8b97; }
.orb { width: 54px; margin-right: 3px; }
.task { width: 62px; border: 0; padding: 0; display: flex; align-items: center; justify-content: center; background: none; }
.task.open { background: linear-gradient(160deg, #8d9399, #3c4249 45%, #23282e); border: 1px solid #777f87; border-radius: 3px; margin: 0 2px; width: 58px; }
.task.lit { background: linear-gradient(160deg, #f4f5f6, #9ea3a8 55%, #6b7177); }
.task.glow { background: radial-gradient(ellipse at bottom, #6f9bd0, transparent 50%); }
.ui-tile { width: 32px; height: 32px; background: #0067df; color: #fff; font: 700 18px/34px "Open Sans", sans-serif; text-align: center; }
.ui-tile.deep { background: #00479d; }
.ibas { width: 36px; height: 32px; border-radius: 4px; background: linear-gradient(to bottom, #1f7a33, #4fae57 50%, #d5f0cf); color: #fff; font: 700 12px/30px "Open Sans", sans-serif; text-align: center; }
.tray { margin-left: auto; display: flex; align-items: center; gap: 11px; }
.clock { width: 54px; margin: 0 -3px 0 3px; display: flex; flex-direction: column; align-items: center; color: #fff; font-size: 11px; line-height: 17px; white-space: nowrap; }
.show-desktop { width: 13px; align-self: stretch; border: 1px solid #596672; background: #232b33; margin-right: 1px; }

/* Internet Explorer window */
.sheets { font-family: Roboto, "Liberation Sans", sans-serif; }
.ie-bar { position: relative; height: 55px; flex: none; display: flex; align-items: flex-end; border-bottom: 1px solid #12283c; font-family: "Open Sans", sans-serif; }
.ie-bar > * { position: relative; }
.ie-bar > .glass, .ie-bar > .win-buttons { position: absolute; }
.ie-back { width: 36px; height: 36px; border-radius: 50%; background: #0d87cf; margin: 0 5px -1px 2px; }
.ie-forward { width: 24px; height: 24px; border: 1px solid #7d95aa; border-radius: 50%; margin: 0 4px 4px 0; }
.ie-address { width: 544px; height: 24px; margin-bottom: 4px; background: #a9b9c9; border: 1px solid #3b5872; display: flex; align-items: center; gap: 4px; padding: 0 4px; color: #6a7986; }
.ie-url { flex: 1; overflow: hidden; white-space: nowrap; font-size: 11px; }
.ie-url b { font-weight: 400; color: #000; }
.ie-tab { width: 198px; height: 27px; margin-left: 5px; background: #fff; display: flex; align-items: center; gap: 4px; padding: 0 6px 0 5px; white-space: nowrap; font-size: 11px; }
.ie-stub { width: 29px; height: 27px; background: #8293a3; border: 1px solid #244159; border-bottom: 0; }
.ie-tools { display: flex; gap: 9px; margin: 0 8px 8px auto; }

/* Document header */
.doc-head { height: 59px; flex: none; display: flex; padding: 0 18px 0 20px; }
.doc-logo { margin-top: 12px; }
.doc-info { margin: 7px 0 0 20px; }
.doc-title { display: flex; align-items: center; gap: 11px; height: 26px; }
.doc-title h1 { font: 400 17px/26px Roboto, sans-serif; margin-right: 5px; }
.doc-menu { display: flex; gap: 13px; margin-top: 2px; font-size: 13px; line-height: 18px; color: #202124; white-space: nowrap; }
.last-edit { margin-left: 6px; color: #777; font-size: 12px; text-decoration: underline; }
.doc-actions { margin: 0 0 3px auto; display: flex; align-items: center; }
.doc-actions > svg { margin-right: 26px; }
.share { width: 80px; height: 32px; margin: 0 17px 0 -9px; border: 0; border-radius: 4px; background: #1b8339; color: #fff; font: 500 14px Roboto, sans-serif; display: flex; align-items: center; justify-content: center; gap: 8px; }
.work { flex: 1; min-height: 0; display: flex; }
.work-main { flex: 1; min-width: 0; display: flex; flex-direction: column; border-right: 1px solid #dadce0; border-bottom: 1px solid #dadce0; }

.toolbar { height: 35px; flex: none; border-top: 1px solid #d4d6da; border-bottom: 1px solid #d4d6da; display: flex; align-items: center; padding: 0 12px 0 27px; }
.tool { width: 25px; height: 24px; border: 0; background: none; padding: 0; display: flex; align-items: center; justify-content: center; color: #5f6368; font: 500 12px Roboto, sans-serif; white-space: nowrap; }
.sep { width: 1px; height: 18px; margin: 0 4px; background: #dadce0; }
.sep.wide { margin: 0 8px 0 6px; }
.drop { justify-content: flex-start; }
.drop::after { content: ""; width: 8px; height: 4px; margin-left: auto; margin-right: 3px; border: 4px solid transparent; border-top-color: #5f6368; border-bottom: 0; }
.faint::after { border-top-color: #b9bbbe; }
.zoom { width: 58px; padding-left: 9px; }
.number { width: 33px; padding-left: 2px; }
.font { width: 96px; padding-left: 10px; font-size: 11px; }
.font::after, .size::after { margin-right: 6px; }
.size { width: 55px; padding-left: 7px; }
.dec { flex-direction: column; font-size: 12px; line-height: 12px; }
.heavy { font-size: 16px; font-weight: 700; }
.slant { font-style: italic; font-family: "Liberation Serif", serif; }
.struck { text-decoration: line-through; }
.inked { font-size: 16px; line-height: 18px; height: 22px; box-shadow: inset 0 -4px #000; width: 19px; margin: 0 3px; }
.pair { width: 36px; padding-left: 4px; }
.filter { width: 42px; }

.formula { height: 22px; flex: none; display: flex; align-items: center; border-bottom: 1px solid #c4c7cb; }
.formula label { width: 40px; text-align: center; border-right: 1px solid #dadce0; color: #b0b3b7; font: italic 16px/16px "Liberation Serif", serif; }
.formula input { flex: 1; border: 0; height: 18px; outline: 0; }

.grid-area { flex: 1; min-height: 0; display: flex; }
.grid-view { flex: 1; min-width: 0; overflow: hidden; }
.grid { width: 100%; table-layout: fixed; border-collapse: separate; border-spacing: 0; font: 12px/18px "Liberation Sans", Arial, sans-serif; }
.grid td, .grid th { height: 19px; padding: 0 0 0 3px; border-right: 1px solid #e2e3e3; border-bottom: 1px solid #e2e3e3; white-space: nowrap; overflow: hidden; text-align: left; }
.grid th + td { padding-left: 2px; overflow: visible; }
.grid th { padding: 0; border-color: #c0c0c0; background: #f8f9fa; color: #5f6368; font: 400 10px/18px Roboto, sans-serif; text-align: center; }
.grid thead th { height: 22px; font-size: 12px; }
.grid th.on { background: #e8eaed; }
.grid .freeze td { height: 5px; padding: 0; border: 0; background: #dadfe8; }
.grid .freeze td:first-child { background: #b7b7b7; }
.grid td.picked { box-shadow: inset 0 0 0 2px #1a73e8; position: relative; overflow: visible; }
.grid td.picked::after { content: ""; position: absolute; right: -4px; bottom: -3px; width: 8px; height: 8px; background: #1a73e8; border: 1px solid #fff; }
.vbar { width: 15px; flex: none; display: flex; flex-direction: column; align-items: center; margin-top: 45px; background: #f0f0f0; border-left: 1px solid #dadce0; padding: 14px 0 17px; }
.vthumb { width: 13px; height: 12px; margin-top: 124px; background: #c8c8c8; }
.vbar-down { margin-top: auto; }
.hbar { height: 15px; flex: none; display: flex; align-items: center; background: #f0f0f0; border-bottom: 1px solid #dfe1e5; }
.hbar-end { width: 41px; margin-right: 14px; align-self: stretch; background: #f8f8f8; border-right: 1px solid #dadce0; }
.hthumb { width: 58%; height: 14px; margin-left: 9px; background: #cacaca; }
.hbar .push { margin-right: 16px; }
.corner { width: 15px; align-self: stretch; border: 1px solid #dadce0; background: #f8f8f8; }
.sheet-bar { height: 35px; flex: none; display: flex; align-items: center; gap: 16px; padding-left: 44px; background: #f1f3f4; }
.sheet-tab { align-self: stretch; width: 87px; margin-left: 4px; border: 0; background: #fff; color: #188038; font: 500 13px Roboto, sans-serif; display: flex; align-items: center; justify-content: center; gap: 8px; padding: 0; box-shadow: 1px 0 2px #c9ccd0; }
.explore { margin-left: auto; align-self: stretch; width: 94px; border: 0; border-left: 1px solid #c0c3c7; background: #fbfefd; color: #12a05c; font: 11px Roboto, sans-serif; display: flex; align-items: center; gap: 12px; padding: 0 0 0 10px; }

.addons { width: 50px; flex: none; display: flex; flex-direction: column; align-items: center; gap: 34px; padding: 17px 0 21px; border-top: 0; }
.addons-toggle { margin-top: auto; }
```
FILE: grid.js
```js
const widths = [41, 206, 122, 122, 115, 199, 130, 92, 91, 91, 91, 91, 91, 91, 91, 91, 91, 0];
const letters = ['', ...'ABCDEFGHIJKLMNOP', ''];
const titles = ['Process ID', 'Process Type', 'Time Start', 'Status', 'BOT Remarks', 'Time End'];
const records = [
  ['07:17:23', '13:58:26', '13:58:53'],
  ['07:39:10', '16:47:24', '16:47:49'],
  ['16:46:37', '16:47:55', '16:48:20'],
  ['07:39:19', '16:48:26', '16:48:51'],
  ['07:40:28', '16:48:57', '16:49:21'],
  ['07:40:59', '16:49:28', '16:49:52'],
  ['07:40:59', '16:49:28', '16:49:56'],
  ['07:42:08', '17:10:47', '17:11:11'],
  ['07:42:13', '17:11:18', '17:11:43'],
  ['07:42:24', '17:11:49', '17:12:13'],
  ['07:42:26', '17:12:19', '17:12:44'],
  ['07:42:28', '17:12:50', '17:13:15'],
  ['07:42:28', '17:12:50', '17:14:03', 'EXCEPTION', 'Cannot find the UI element correspon']
];
const firstRow = 1271;
const lastRow = 1313;
const selected = { row: 1285, column: 4 };

const row = (number, cells) => {
  let html = `<tr><th scope="row"${number === selected.row ? ' class="on"' : ''}>${number}</th>`;
  for (let i = 1; i < letters.length; i++) {
    const picked = number === selected.row && i === selected.column;
    html += `<td${picked ? ' class="picked"' : ''}>${cells[i - 1] || ''}</td>`;
  }
  return html + '</tr>';
};

document.getElementById('cols').innerHTML =
  widths.map(w => w ? `<col style="width:${w}px">` : '<col>').join('');
document.getElementById('head').innerHTML =
  '<tr>' + letters.map((l, i) => `<th${i === selected.column ? ' class="on"' : ''}>${l}</th>`).join('') + '</tr>';

let body = row(1, titles);
body += `<tr class="freeze"><td></td><td colspan="${letters.length - 1}"></td></tr>`;
for (let n = firstRow; n <= lastRow; n++) {
  const r = records[n - firstRow];
  body += row(n, r ? [
    `Inventory Return (20200714 ${r[0]})`, 'ERP - RETURN', `07/14/2020 ${r[1]}`,
    r[3] || 'DONE', r[4] || 'SUCCESS', `07/14/2020 ${r[2]}`
  ] : []);
}
document.getElementById('rows').innerHTML = body;
```
